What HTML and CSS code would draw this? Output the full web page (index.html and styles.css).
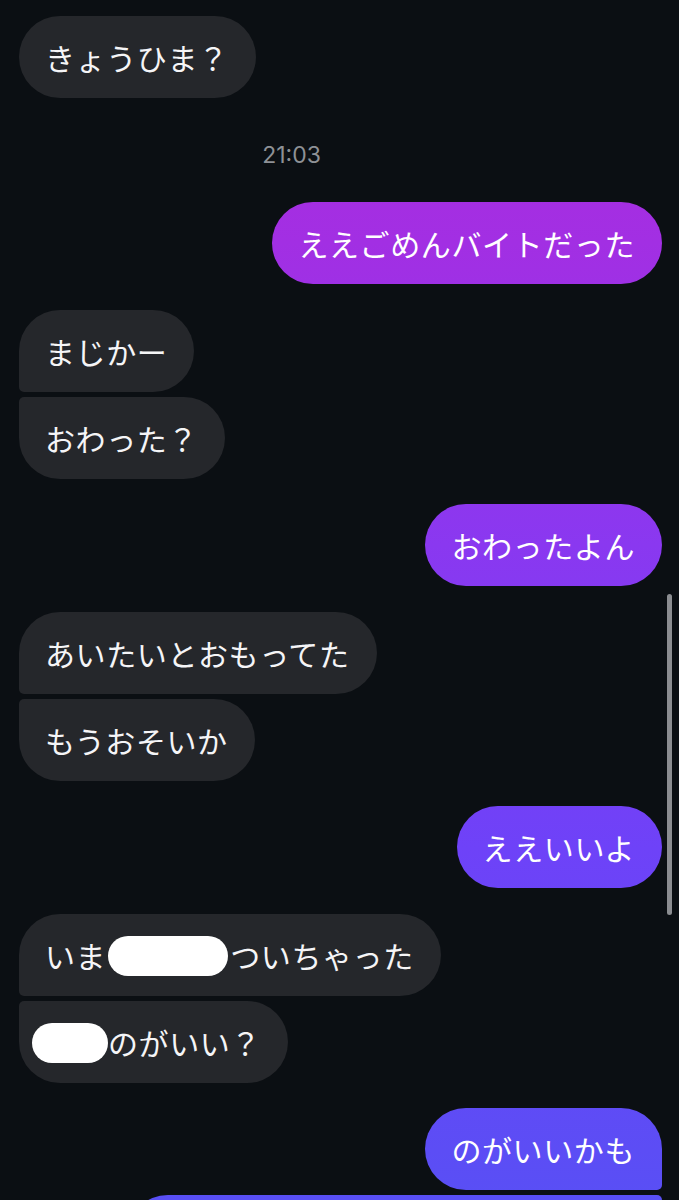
FILE: index.html
```html
<!DOCTYPE html>
<html lang="ja">

<head>
    <meta charset="UTF-8">
    <meta name="viewport" content="width=device-width, initial-scale=1.0">
    <title>メッセージ</title>
    <link rel="stylesheet" href="styles.css">
</head>

<body>
    <main class="chat">
        <div class="group in">
            <div class="bubble">きょうひま？</div>
        </div>

        <div class="time">21:03</div>

        <div class="group out">
            <div class="bubble">ええごめんバイトだった</div>
        </div>

        <div class="group in">
            <div class="bubble">まじかー</div>
            <div class="bubble">おわった？</div>
        </div>

        <div class="group out">
            <div class="bubble">おわったよん</div>
        </div>

        <div class="group in">
            <div class="bubble">あいたいとおもってた</div>
            <div class="bubble">もうおそいか</div>
        </div>

        <div class="group out">
            <div class="bubble">ええいいよ</div>
        </div>

        <div class="group in">
            <div class="bubble">いま<span class="redact redact-mid"></span>ついちゃった</div>
            <div class="bubble"><span class="redact redact-start"></span>のがいい？</div>
        </div>

        <div class="group out">
            <div class="bubble">のがいいかも</div>
            <div class="bubble wide">&nbsp;</div>
        </div>
    </main>

    <div class="scrollbar"></div>
</body>

</html>
```
FILE: styles.css
```css
html,
body {
    height: 100%;
}

body {
    margin: 0;
    background-color: #0b0f13;
    color: #f5f5f7;
    font-family: "Noto Sans CJK JP", "Noto Sans", sans-serif;
    overflow: hidden;
}

.chat {
    display: flex;
    flex-direction: column;
    gap: 25.5px;
    padding: 16px 17px 0 19px;
}

.group {
    display: flex;
    flex-direction: column;
    gap: 5px;
}

.group.in {
    align-items: flex-start;
}

.group.out {
    align-items: flex-end;
}

.bubble {
    box-sizing: border-box;
    height: 82px;
    padding: 0 27px 0 26px;
    border-radius: 41px;
    font-size: 30px;
    letter-spacing: 0.6px;
    line-height: 82px;
    white-space: nowrap;
    display: flex;
    align-items: center;
}

.in .bubble {
    background: #25272b;
}

.out .bubble {
    color: #ffffff;
    background: linear-gradient(to bottom,
            #b02bdc 0px,
            #a22fe3 243px,
            #8a38f0 545px,
            #6e42f8 848px,
            #5c4df5 1150px,
            #594ff5 1200px);
    background-attachment: fixed;
}

/* grouped bubbles get a small corner on the joined side */
.in .bubble:not(:last-child) {
    border-bottom-left-radius: 5px;
}

.in .bubble:not(:first-child) {
    border-top-left-radius: 5px;
}

.out .bubble:not(:last-child) {
    border-bottom-right-radius: 5px;
}

.out .bubble:not(:first-child) {
    border-top-right-radius: 5px;
}

.bubble.wide {
    width: 535px;
}

.redact {
    display: inline-block;
    background: #ffffff;
    height: 40px;
    border-radius: 20px;
}

.redact-mid {
    width: 120px;
    margin: 2px 2px 0;
}

.redact-start {
    width: 76px;
    margin: 2px 0 0 -13px;
}

.time {
    padding: 17px 98px 8px 0;
    text-align: center;
    font-family: Inter, "Noto Sans", sans-serif;
    font-size: 23px;
    line-height: 28px;
    color: #8e9196;
}

.scrollbar {
    position: absolute;
    left: 667px;
    top: 594px;
    width: 5px;
    height: 321px;
    border-radius: 3px;
    background: #8b8d91;
}
```
